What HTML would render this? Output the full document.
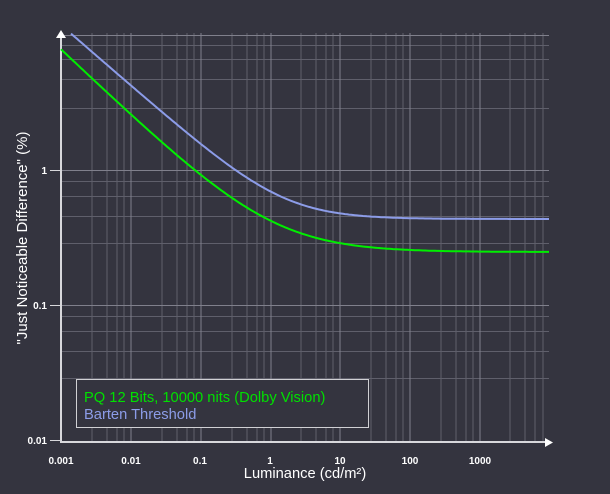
<!DOCTYPE html>
<html><head><meta charset="utf-8"><style>
html,body{margin:0;padding:0;background:#34343f;}
svg{display:block}
text{font-family:"Liberation Sans",sans-serif;}
</style></head><body>
<svg width="610" height="494" viewBox="0 0 610 494" xmlns="http://www.w3.org/2000/svg">
<rect width="610" height="494" fill="#34343f"/>
<g stroke="#5f5f6b" stroke-width="1">
<path d="M92,33V441M107,33V441M117,33V441M124,33V441
M162,33V441M177,33V441M187,33V441M194,33V441
M232,33V441M247,33V441M257,33V441M264,33V441
M301,33V441M316,33V441M326,33V441M333,33V441
M371,33V441M386,33V441M396,33V441M403,33V441
M441,33V441M456,33V441M466,33V441M473,33V441
M510,33V441M525,33V441M535,33V441M543,33V441"/>
<path d="M61,45.5H549M61,59.5H549M61,79.5H549M61,108.5H549
M61,181.5H549M61,196.5H549M61,216.5H549M61,243.5H549
M61,316.5H549M61,331.5H549M61,351.5H549M61,378.5H549"/>
</g>
<g stroke="#80808c" stroke-width="1">
<path d="M131,33V441M201,33V441M271,33V441M340,33V441M410,33V441M480,33V441
M61,35.5H549M61,170.5H549M61,305.5H549"/>
</g>
<g stroke="#d8d8dc" stroke-width="2">
<line x1="61" y1="36" x2="61" y2="442"/>
<line x1="60" y1="442" x2="547" y2="442"/>
<line x1="50" y1="170.5" x2="61" y2="170.5" stroke-width="1"/>
<line x1="50" y1="305.5" x2="61" y2="305.5" stroke-width="1"/>
<line x1="50" y1="440.5" x2="61" y2="440.5" stroke-width="1"/>
</g>
<polygon points="61,30 56,38 66,38" fill="#ffffff"/>
<polygon points="553,442.5 545,438 545,447" fill="#ffffff"/>
<polyline id="blue" fill="none" stroke="#8c9ce8" stroke-width="2" stroke-linejoin="round" points=""/>
<polyline id="green" fill="none" stroke="#00ee00" stroke-width="2" stroke-linejoin="round" points=""/>
<g fill="#ffffff" font-size="10" font-weight="bold">
<text x="47" y="174" text-anchor="end">1</text>
<text x="47" y="309" text-anchor="end">0.1</text>
<text x="47" y="444" text-anchor="end">0.01</text>
<text x="61" y="464" text-anchor="middle">0.001</text>
<text x="131" y="464" text-anchor="middle">0.01</text>
<text x="200" y="464" text-anchor="middle">0.1</text>
<text x="270" y="464" text-anchor="middle">1</text>
<text x="340" y="464" text-anchor="middle">10</text>
<text x="410" y="464" text-anchor="middle">100</text>
<text x="480" y="464" text-anchor="middle">1000</text>
</g>
<text x="305" y="478" text-anchor="middle" fill="#ffffff" font-size="14.7">Luminance (cd/m²)</text>
<text transform="translate(27,238) rotate(-90)" text-anchor="middle" fill="#ffffff" font-size="15">"Just Noticeable Difference" (%)</text>
<rect x="76.5" y="379.5" width="292" height="48" fill="#34343f" stroke="#d0d0d4" stroke-width="1"/>
<text x="84" y="402" fill="#00e000" font-size="14.7">PQ 12 Bits, 10000 nits (Dolby Vision)</text>
<text x="84" y="419" fill="#8c9ce8" font-size="14.7">Barten Threshold</text>
</svg>
<script>
function pts(x1,x2,a,k,x0,s){var p=[];for(var x=x1;x<=x2;x+=2){var y=a-k*s*Math.log(1+Math.exp((x0-x)/s));if(y<33)continue;p.push(x+","+y.toFixed(1));}return p.join(" ");}
document.getElementById("blue").setAttribute("points",pts(71,550,219,0.87,284,35));
document.getElementById("green").setAttribute("points",pts(61,550,252,0.95,274,45));
</script>
</body></html>
